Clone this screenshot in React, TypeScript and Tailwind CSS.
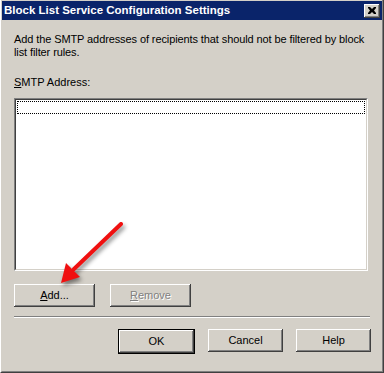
import React from 'react';

const btn =
  'w-[75px] h-[23px] bg-[#d4d0c8] text-[11px] shadow-[inset_-1px_-1px_#404040,inset_1px_1px_#ffffff,inset_-2px_-2px_#808080,inset_2px_2px_#d4d0c8] flex items-center justify-center';

const RedArrow = () => (
  <svg
    className="absolute left-0 top-0 pointer-events-none drop-shadow-[2px_3px_2px_rgba(0,0,0,0.45)]"
    width="384"
    height="373"
    viewBox="0 0 384 373"
  >
    <line x1="121" y1="224" x2="74" y2="269" stroke="#f01010" strokeWidth="4" strokeLinecap="round" />
    <polygon points="61,283 66,263 80,277" fill="#f01010" />
  </svg>
);

export default function App() {
  return (
    <div className="relative w-[384px] h-[373px] bg-[#d4d0c8] font-['Liberation_Sans',Arial,sans-serif] text-black select-none">
      <div className="w-full h-full border-l border-l-white border-r border-r-[#404040] border-b border-b-[#404040]">
        <div className="w-full h-full border-l border-l-[#d4d0c8] border-r border-r-[#808080] border-b border-b-[#808080] pt-[1px] flex flex-col">
          {/* Title bar */}
          <div className="h-[19px] bg-[#0a246a] flex items-center justify-between pl-[2px] pr-[2px]">
            <span className="text-white font-bold text-[11.5px] leading-none whitespace-nowrap">
              Block List Service Configuration Settings
            </span>
            <div className="w-[16px] h-[14px] bg-[#d4d0c8] shadow-[inset_-1px_-1px_#404040,inset_1px_1px_#ffffff,inset_-2px_-2px_#808080] flex items-center justify-center">
              <svg width="8" height="7" viewBox="0 0 8 7">
                <path d="M0 0h2l2 2 2-2h2v1l-2 2.5 2 2.5v1h-2l-2-2-2 2h-2v-1l2-2.5-2-2.5z" fill="#000" />
              </svg>
            </div>
          </div>

          {/* Body */}
          <div className="flex flex-col pl-[12px] pr-[11px]">
            <p className="mt-[13px] text-[11px] leading-[13px] tracking-[-0.1px] whitespace-nowrap">
              Add the SMTP addresses of recipients that should not be filtered by block
              <br />
              list filter rules.
            </p>

            <label className="mt-[17px] text-[11px] leading-[13px]">
              <span className="underline underline-offset-1">S</span>MTP Address:
            </label>

            <div className="mt-[9px] w-[354px] h-[173px] bg-white border border-t-[#808080] border-l-[#808080] border-r-white border-b-white">
              <div className="w-full h-full border border-t-[#404040] border-l-[#404040] border-r-[#d4d0c8] border-b-[#d4d0c8] p-px">
                <div className="h-[13px] border border-dotted border-black" />
              </div>
            </div>

            <div className="mt-[13px] flex gap-[15px]">
              <button className={btn + ' w-[81px] h-[23px] text-black'}>
                <span>
                  <span className="underline underline-offset-1">A</span>dd...
                </span>
              </button>
              <button className={btn + ' w-[81px] h-[23px] text-[#808080]'} disabled>
                <span className="[text-shadow:1px_1px_0_#ffffff]">
                  <span className="underline underline-offset-1">R</span>emove
                </span>
              </button>
            </div>

            <div className="mt-[9px] w-[356px] h-[2px] border-t border-t-[#808080] border-b border-b-white" />

            <div className="mt-[11px] flex justify-end gap-[13px]">
              <div className="border border-black">
                <button className={btn + ' w-[73px] h-[21px] text-black'}>OK</button>
              </div>
              <button className={btn + ' text-black'}>Cancel</button>
              <button className={btn + ' text-black'}>Help</button>
            </div>
          </div>
        </div>
      </div>
      <RedArrow />
    </div>
  );
}
